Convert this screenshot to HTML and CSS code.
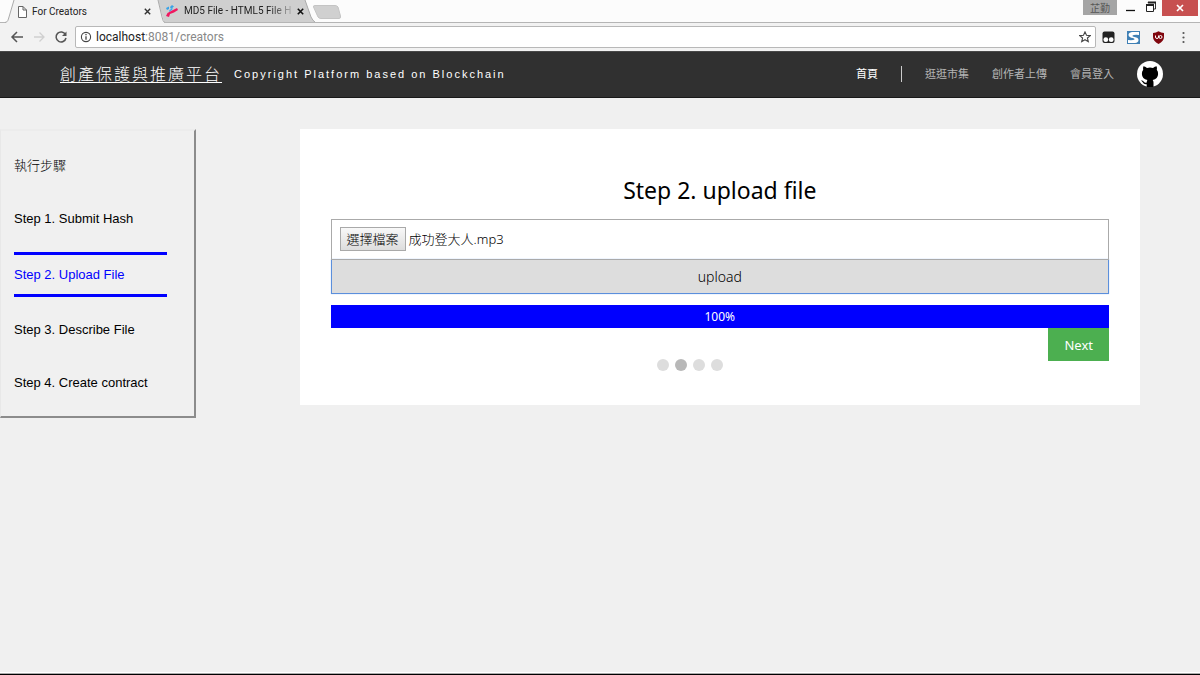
FILE: index.html
```html
<!DOCTYPE html>
<html lang="zh-Hant">
<head>
<meta charset="utf-8">
<title>For Creators</title>
<link rel="stylesheet" href="styles.css">
</head>
<body>
<div class="browser">
  <div class="tab-strip">
    <div class="tab tab-active">
      <svg class="tab-shape" viewBox="0 0 160 23" preserveAspectRatio="none"><path d="M0 23C3 22 3 20 4 17L9 0H153L157 17C158 20 158 22 160 23Z" fill="#f2f2f2"/><path d="M0 22.500C3 22 3 20 4 17L9 0M153 0L157 17C158 20 158 22 160 22.500" fill="none" stroke="#aaa"/></svg>
      <svg class="tab-icon" viewBox="0 0 12 12"><path d="M2.500 .5H7L10.500 4V11.500H2.500ZM7 .5V4H10.500" fill="#fff" stroke="#666"/></svg>
      <span class="tab-title">For Creators</span>
      <button class="tab-close" aria-label="Close tab"><svg viewBox="0 0 7 7"><path d="M.8 .8L6.200 6.200M6.200 .8L.8 6.200" stroke="#333" stroke-width="1.400"/></svg></button>
    </div>
    <div class="tab tab-back">
      <svg class="tab-shape" viewBox="0 0 157 22" preserveAspectRatio="none"><path d="M0 0H147L153 17Q155 21 157 22H6Z" fill="#cfcfcf"/><path d="M147 0L153 17Q155 21 157 22" fill="none" stroke="#aaa"/></svg>
      <svg class="tab-icon" viewBox="0 0 12 12"><path d="M0 3L3 1.500L3 4L1 5ZM4 2L6 0L8 1.500L5 4ZM3.500 5L7 3L6 5L3 7Z" fill="#38a3e8"/><path d="M0 11L1.500 8L6 5.500L11 3L12 5L8 7.500L4 9L3 12Z" fill="#f0185f"/></svg>
      <span class="tab-title tab-fade">MD5 File - HTML5 File H</span>
      <button class="tab-close" aria-label="Close tab"><svg viewBox="0 0 7 7"><path d="M.8 .8L6.200 6.200M6.200 .8L.8 6.200" stroke="#111" stroke-width="1.600"/></svg></button>
    </div>
    <button class="new-tab" aria-label="New tab"><svg viewBox="0 0 28 14"><path d="M2 .5H22Q24 .5 25 2L27.500 11Q28 13.500 26 13.500H8Q6 13.500 5 12L.5 2Q0 .5 2 .5Z" fill="#d0d0d0" stroke="#c4c4c4"/></svg></button>
    <div class="window-controls">
      <button class="profile">芷勤</button>
      <button class="win-button" aria-label="Minimize"><svg viewBox="0 0 12 14"><path d="M2 10.500H11" stroke="#111" stroke-width="1.300"/></svg></button>
      <button class="win-button" aria-label="Restore"><svg viewBox="0 0 12 14"><path d="M3 3V2.500H10.500V9H9" fill="none" stroke="#333"/><path d="M1.500 5.500H8.500V11.500H1.500Z" fill="#fff" stroke="#222"/><path d="M1 5H9M3 2.500H11" stroke="#222" stroke-width="2"/></svg></button>
      <button class="win-close" aria-label="Close window"><svg viewBox="0 0 8 8"><path d="M1 1L7 7M7 1L1 7" stroke="#fff" stroke-width="1.700"/></svg></button>
    </div>
  </div>
  <div class="toolbar">
    <button class="tool" aria-label="Back"><svg viewBox="0 0 14 14"><path d="M13 7H2M7 2L2 7L7 12" fill="none" stroke="#555" stroke-width="1.500"/></svg></button>
    <button class="tool" aria-label="Forward"><svg viewBox="0 0 14 14"><path d="M2 7H12M7.500 2.500L12 7L7.500 11.500" fill="none" stroke="#d0d0d0" stroke-width="1.300"/></svg></button>
    <button class="tool" aria-label="Reload"><svg viewBox="0 0 14 14"><path d="M11.500 4.500A5 5 0 1 0 12 8" fill="none" stroke="#555" stroke-width="1.500"/><path d="M12.500 1.500V6H8Z" fill="#555"/></svg></button>
    <div class="address">
      <svg class="info" viewBox="0 0 12 12"><circle cx="6" cy="6" r="4.600" fill="none" stroke="#444" stroke-width="1.100"/><path d="M6 5.200V8.800M6 3V4.300" stroke="#444" stroke-width="1.300"/></svg>
      <span class="url"><span class="host">localhost</span>:8081/creators</span>
      <button class="star" aria-label="Bookmark"><svg viewBox="0 0 12 12"><path d="M6 .9L7.500 4.300L11.200 4.600L8.400 7L9.300 10.700L6 8.700L2.700 10.700L3.600 7L.8 4.600L4.500 4.300Z" fill="none" stroke="#444" stroke-width="1.100"/></svg></button>
    </div>
    <div class="extensions">
      <button aria-label="Tampermonkey"><svg viewBox="0 0 13 13"><rect x=".5" y=".5" width="12" height="11.500" rx="2" fill="#222"/><circle cx="3.800" cy="8.700" r="2.400" fill="#fff"/><circle cx="9.200" cy="8.700" r="2.400" fill="#fff"/></svg></button>
      <button aria-label="Stylish"><svg viewBox="0 0 13 13"><path d="M0 0H13V13H0Z" fill="#3f80b5"/><path d="M12 1H5Q1.500 1.500 1.500 4Q2 6.500 6 7Q8 7.500 7.500 8.500Q6 9.500 1 9V12H8Q11.500 11.500 11.500 9Q11.500 6.500 7.500 6Q5 5.500 5.500 4.500Q7 3.500 12 4Z" fill="#fff"/></svg></button>
      <button aria-label="uBlock"><svg viewBox="0 0 13 13"><path d="M6.500 .3Q9 2 12 2V6Q12 10 6.500 13Q1 10 1 6V2Q4 2 6.500 .3Z" fill="#80060e"/><path d="M3.500 4.500V6Q3.500 7.500 5 7.500Q6.500 7.500 6.500 6V4.500" fill="none" stroke="#fff"/><circle cx="8.500" cy="6" r="1.500" fill="none" stroke="#fff"/></svg></button>
      <button aria-label="Menu"><svg viewBox="0 0 13 13"><circle cx="6.500" cy="2" r="1.100" fill="#555"/><circle cx="6.500" cy="6.500" r="1.100" fill="#555"/><circle cx="6.500" cy="11" r="1.100" fill="#555"/></svg></button>
    </div>
  </div>
</div>
<header class="site-header">
  <a class="brand" href="#">創產保護與推廣平台</a>
  <span class="tagline">Copyright Platform based on Blockchain</span>
  <nav class="nav">
    <a class="nav-current" href="#">首頁</a>
    <span class="divider"></span>
    <a href="#">逛逛市集</a>
    <a href="#">創作者上傳</a>
    <a href="#">會員登入</a>
    <a class="github" href="#" aria-label="GitHub"><svg viewBox="0 0 26 26"><circle cx="13" cy="13" r="13" fill="#fff"/><path d="M6.400 5.300Q8.200 5.500 10 6.900Q13 6.200 16 6.900Q17.800 5.500 19.600 5.300Q20.300 7 19.800 8.800Q21.300 10.500 21.100 13Q20.900 18.300 15.700 18.900Q16.600 20 16.500 21.600V26H9.700V23.200Q6.800 23.600 5.700 21.300Q5 20 3.900 19.500Q5.600 19.100 6.900 20.800Q7.900 22.200 9.700 21.500Q9.800 19.800 10.400 18.900Q5.100 18.300 4.900 13Q4.700 10.500 6.200 8.800Q5.800 7 6.400 5.300Z" fill="#000"/></svg></a>
  </nav>
</header>
<div class="page">
  <aside class="steps">
    <div class="steps-title">執行步驟</div>
    <div class="step">Step 1. Submit Hash</div>
    <div class="step step-current">Step 2. Upload File</div>
    <div class="step">Step 3. Describe File</div>
    <div class="step">Step 4. Create contract</div>
  </aside>
  <main class="content">
    <form class="card">
      <h1 class="card-title">Step 2. upload file</h1>
      <div class="file-field">
        <input class="file-input" type="file" id="file">
        <label class="file-button" for="file">選擇檔案</label>
        <span class="file-name">成功登大人.mp3</span>
      </div>
      <button class="upload" type="button">upload</button>
      <div class="progress"><div class="progress-bar" style="width: 100%">100%</div></div>
      <div class="actions"><button class="next" type="button">Next</button></div>
      <div class="dots"><span class="dot"></span><span class="dot dot-current"></span><span class="dot"></span><span class="dot"></span></div>
    </form>
  </main>
</div>
<div class="window-edge"></div>
</body>
</html>
```
FILE: styles.css
```css
* { box-sizing: border-box; }
body {
  margin: 0;
  min-height: 100vh;
  display: flex;
  flex-direction: column;
  background: #f0f0f0;
  color: #000;
  font-family: "Noto Sans", "Noto Sans CJK TC", sans-serif;
}
button { font: inherit; border: 0; padding: 0; background: none; color: inherit; }
svg { display: block; }

.tab-strip { display: flex; height: 23px; background: #fcfcfc; border-bottom: 1px solid #b5b5b5; padding-left: 5px; }
.tab { position: relative; display: flex; align-items: center; width: 160px; height: 23px; padding: 0 14px 0 11px; font-family: Roboto, "Noto Sans", sans-serif; font-size: 10px; line-height: 14px; }
.tab-active { z-index: 1; }
.tab-back { height: 22px; width: 157px; margin-left: -7px; padding: 0 13px 0 8px; }
.tab-shape { position: absolute; inset: 0; width: 100%; height: 100%; }
.tab-icon { position: relative; width: 12px; height: 12px; flex: none; }
.tab-title { position: relative; flex: 1; margin-left: 4px; white-space: nowrap; color: #222; }
.tab-back .tab-title { margin-left: 6px; }
.tab-fade { mask-image: linear-gradient(to right, #000 80%, #0003 100%); }
.tab-close { position: relative; width: 7px; margin-left: 6px; flex: none; }
.new-tab { width: 28px; height: 14px; margin: 5px 0 0 -2px; }
.window-controls { display: flex; align-items: flex-start; margin: 0 2px 0 auto; }
.profile { width: 34px; height: 15px; background: #a5a5a5; color: #555; font-size: 10px; line-height: 14px; text-align: center; }
.win-button { width: 12px; margin-left: 7px; }
.win-button + .win-button { margin-left: 9px; }
.win-close { display: grid; place-items: center; width: 36px; height: 16px; margin-left: 5px; background: #c75050; }
.win-close svg { width: 8px; }

.toolbar { display: flex; align-items: center; height: 28px; background: #f2f2f2; padding: 0 10px; gap: 8px; }
.tool { width: 14px; flex: none; }
.address { display: flex; align-items: center; flex: 1; height: 22px; margin-left: -1px; border: 1px solid #b8b8b8; border-radius: 2px; background: #fff; padding: 0 4px; font-family: Roboto, "Noto Sans", sans-serif; font-size: 12px; line-height: 18px; }
.info { width: 12px; flex: none; }
.url { margin-left: 4px; color: #888; }
.host { color: #222; }
.star { width: 12px; margin-left: auto; }
.extensions { display: flex; gap: 12px; margin-left: -2px; }
.extensions button { width: 13px; }

.site-header { display: flex; align-items: center; height: 47px; background: #303030; border-top: 1px solid #484848; border-bottom: 1px solid #181818; padding: 0 37px 2px 60px; color: #fff; white-space: nowrap; }
.brand { color: #fff; font-size: 16px; line-height: 24px; letter-spacing: 2px; font-weight: 300; text-underline-offset: 2px; }
.tagline { margin-left: 12px; font-family: "Liberation Sans", sans-serif; font-size: 11px; line-height: 16px; letter-spacing: 2px; }
.nav { display: flex; align-items: center; gap: 23px; margin-left: auto; font-size: 11px; line-height: 16px; }
.nav a { color: #b5b5b5; text-decoration: none; }
.nav .nav-current { color: #fff; }
.divider { width: 1px; height: 16px; background: #ccc; }
.github { width: 26px; }

.page { display: flex; flex: 1; align-items: flex-start; padding: 31px 0; }
.steps { width: 16.3%; border: 2px solid; border-left-width: 1px; border-color: #ececec #8c8c8c #8c8c8c #e8e8e8; padding: 25px 27px 7px 13px; font-family: "Liberation Sans", "Noto Sans CJK TC", sans-serif; font-size: 13px; line-height: 18px; white-space: nowrap; }
.steps-title { padding-bottom: 17px; font-weight: 300; line-height: 19px; }
.step { padding: 18px 0 17px; }
.step-current { padding: 11px 0 10px; border-top: 3px solid #00f; border-bottom: 3px solid #00f; margin: 7px 0 6px; color: #00f; }
.content { flex: 1; padding: 0 5% 0 104px; }
.card { background: #fff; padding: 45px 31px 34px; }
.card-title { margin: 0 0 13px; font-size: 23px; line-height: 32px; font-weight: 400; text-align: center; }
.file-field { position: relative; display: flex; align-items: center; height: 41px; border: 1px solid #aaa; padding: 0 8px 2px; font-size: 13px; line-height: 18px; }
.file-input { position: absolute; width: 1px; height: 1px; opacity: 0; }
.file-button { border: 1px solid #a9a9a9; background: linear-gradient(#f8f8f8, #ddd); padding: 2px 6px; font-weight: 300; }
.file-name { margin-left: 3px; font-weight: 300; }
.upload { display: block; width: 100%; height: 35px; margin-top: -1px; border: 1px solid #5b8fdc; background: #ddd; font-size: 14px; font-weight: 300; line-height: 18px; box-shadow: 0 0 1px #9fc2f5; }
.progress { margin-top: 11px; }
.progress-bar { background: #00f; color: #fff; font-size: 12px; line-height: 23px; text-align: center; }
.actions { display: flex; justify-content: flex-end; }
.next { background: #4caf50; color: #fff; padding: 1px 16px 0; font-size: 13px; line-height: 32px; }
.dots { display: flex; justify-content: center; gap: 6px; margin: -2px 60px 0 0; }
.dot { width: 12px; height: 12px; border-radius: 50%; background: #ddd; }
.dot-current { background: #b8b8b8; }
.window-edge { height: 3px; background: #000; border-top: 1px solid #fff; box-shadow: inset 0 1px #aaa; }
```
